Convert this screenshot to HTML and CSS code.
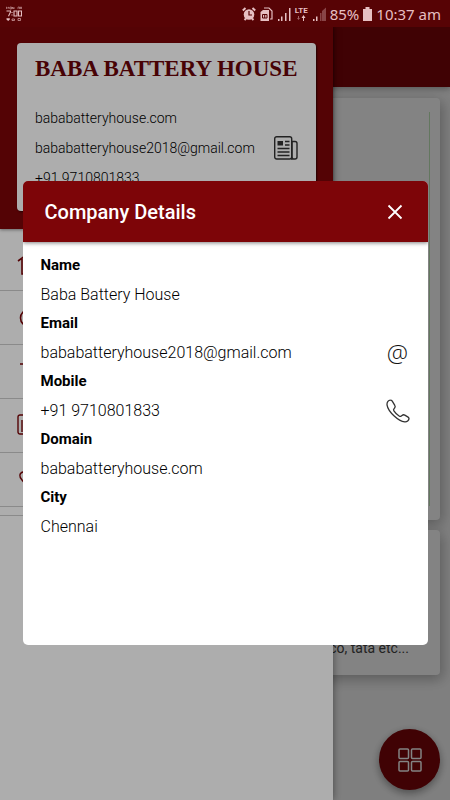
FILE: index.html
```html
<!DOCTYPE html>
<html lang="en">
<head>
<meta charset="utf-8">
<meta name="viewport" content="width=device-width, initial-scale=1">
<title>Company Details</title>
<link rel="stylesheet" href="styles.css">
</head>
<body>
<div class="page">
  <header class="page-bar"></header>
  <main class="page-body">
    <section class="card card-tall"><div class="card-media"></div></section>
    <section class="card card-short"><p>co, tata etc...</p></section>
  </main>
  <button class="fab" type="button" aria-label="Categories">
    <svg viewBox="0 0 24 24" width="24" height="24" fill="none" stroke="currentColor" stroke-width="1.5"><rect x="1" y="1" width="9.500" height="9.500" rx="1"/><rect x="13.500" y="1" width="9.500" height="9.500" rx="1"/><rect x="1" y="13.500" width="9.500" height="9.500" rx="1"/><rect x="13.500" y="13.500" width="9.500" height="9.500" rx="1"/></svg>
  </button>
</div>

<div class="drawer-layer">
  <aside class="drawer">
    <header class="drawer-head">
      <div class="profile">
        <h1>BABA BATTERY HOUSE</h1>
        <div class="profile-row">
          <div class="profile-lines">
            <p>bababatteryhouse.com</p>
            <p>bababatteryhouse2018@gmail.com</p>
            <p>+91 9710801833</p>
          </div>
          <button class="icon-button" type="button" aria-label="Company details">
            <svg viewBox="0 0 24 24" width="24" height="24" fill="none" stroke="currentColor" stroke-width="1.4"><rect x=".7" y=".7" width="17" height="22.300" rx="2"/><path d="M18 5.500h3a2 2 0 0 1 2 2v13.500a2 2 0 0 1-2 2h-4M18 5v16a2 2 0 0 0 2.500 2"/><path d="M3.500 5h5.500v4.500H3.500z" fill="currentColor" stroke="none"/><path d="M11 5.500h4.500M11 9h4.500M3.500 12.500h12M3.500 16h12M3.500 19.500h12"/></svg>
          </button>
        </div>
      </div>
    </header>
    <nav class="menu">
      <button type="button" aria-label="Home"><svg viewBox="0 0 24 24" width="24" height="24" fill="none" stroke="currentColor" stroke-width="1.6"><path d="M1 9l11-8 11 8M5 7v15h5v-7h4v7h5V7"/></svg></button>
      <button type="button" aria-label="About"><svg viewBox="0 0 24 24" width="24" height="24" fill="none" stroke="currentColor" stroke-width="1.6"><circle cx="12" cy="12" r="8.500"/><path d="M12 11v6M12 7v1"/></svg></button>
      <button type="button" aria-label="Products"><svg viewBox="0 0 24 24" width="24" height="24" fill="none" stroke="currentColor" stroke-width="1.600"><path d="M3 4h18M7 4v4h10V4M10 8v12h4V8"/></svg></button>
      <button type="button" aria-label="Details"><svg viewBox="0 0 24 24" width="24" height="24" fill="none" stroke="currentColor" stroke-width="1.4"><rect x="1" y="1" width="18" height="19" rx="2"/><path d="M5 6v12M8 6h8M8 10h8M8 14h8"/></svg></button>
      <button type="button" aria-label="Contact"><svg viewBox="0 0 24 24" width="24" height="24" fill="none" stroke="currentColor" stroke-width="1.4"><path d="M6 4C2 5 2 9 5 12c3 4 6 7 10 8 4 1 6-3 4-5l-3-2-3 2c-2-1-4-3-5-5l2-3-2-3z"/></svg></button>
    </nav>
  </aside>
</div>

<div class="modal-layer">
  <section class="modal" role="dialog" aria-labelledby="modal-title">
    <header class="modal-head">
      <h2 id="modal-title">Company Details</h2>
      <button class="close" type="button" aria-label="Close">
        <svg viewBox="0 0 16 16" width="16" height="16" fill="none" stroke="currentColor" stroke-width="1.800"><path d="M1.500 1.500l13 13M14.500 1.500l-13 13"/></svg>
      </button>
    </header>
    <dl class="details">
      <dt>Name</dt>
      <dd>Baba Battery House</dd>
      <dt>Email</dt>
      <dd>bababatteryhouse2018@gmail.com
        <a class="action at" href="#" aria-label="Send email">@</a></dd>
      <dt>Mobile</dt>
      <dd>+91 9710801833
        <a class="action" href="#" aria-label="Call"><svg viewBox="0 0 24 24" width="24" height="24" fill="none" stroke="currentColor" stroke-width="1.300" stroke-linejoin="round"><path d="M4.500 1.200C2.500 1 .8 3.200 1 5.800c.6 3.800 4 8.200 7.200 11.200 3.200 3 6.800 5.400 10.600 5.900 2.200.2 4.100-1.500 4.200-3.300 0-.7-.3-1.100-.9-1.500l-3.300-2c-1.100-.6-1.900-.4-2.800.3l-1 .8c-.6.4-1.100.3-1.900-.2-1.900-1.200-4.100-3.400-5.200-5.100-.5-.8-.5-1.300 0-1.900l.7-1c.7-.9.800-1.800.2-2.700l-2.400-4c-.5-.8-1.100-1.100-1.900-1.100z"/></svg></a></dd>
      <dt>Domain</dt>
      <dd>bababatteryhouse.com</dd>
      <dt>City</dt>
      <dd>Chennai</dd>
    </dl>
  </section>
</div>

<div class="status">
  <svg class="clock-widget" viewBox="0 0 16 16" width="16" height="16" fill="none" stroke="currentColor"><path stroke-width=".8" opacity=".65" d="M.500 3V1l1.200 1 1.200-1v2M4 1h1.500v2H4zM6.500 3V1L8 3V1M12 3V1h1.500v2M14.500 3V1h1v2"/><path stroke-width="1.100" d="M.5 5h4v1L2.500 10.200M6 6v1M6 8.500v1M8 5h3v5H8zM12.500 5h3v5h-3z"/><path stroke-width=".8" opacity=".8" d="M6 14.500V13h2.500v1.500zM12 12.500h2.500v2H12z"/><path fill="currentColor" stroke="none" d="M.5 12.300h3.300v1.200L2.200 15 .5 13.500z"/></svg>
  <div class="status-right">
    <svg viewBox="0 0 14 14" width="14" height="14" fill="none" stroke="currentColor"><circle cx="7" cy="7.500" r="5.300" fill="currentColor" stroke="none"/><path stroke-width="2" d="M.8 3.500L3.500 1M13.200 3.500L10.500 1M2.500 13l1.500-1.500M11.500 13L10 11.500"/><path stroke="#570305" stroke-width="1.200" d="M7 4v4h3"/></svg>
    <svg viewBox="0 0 13 14" width="13" height="14" fill="none" stroke="currentColor"><path fill="currentColor" stroke="none" d="M.5 5L3 3h6v11H.5z"/><path stroke-width="1.200" d="M4 1h5l3 3v8h-2"/><path stroke="#570305" d="M2.500 7.500h4.500v3.500H2.500zM4.700 7.500V11"/></svg>
    <svg viewBox="0 0 14 14" width="14" height="14" fill="currentColor"><path d="M1 12h1.500v2H1zM4 9.500h1.500V14H4zM8 6h1.500v8H8zM12 1h1.500v13H12z"/></svg>
    <span class="lte">LTE<svg viewBox="0 0 10 6" width="10" height="6"><path fill="currentColor" opacity=".5" d="M2 1h1v2h1L2.500 5 1 3h1z"/><path fill="currentColor" d="M7 6h1V3h1.500l-2-3-2 3H7z"/></svg></span>
    <svg viewBox="0 0 14 14" width="14" height="14" fill="currentColor"><path d="M1 12h1.500v2H1zM4 9.500h1.500V14H4z"/><path d="M8 6h1.500v8H8zM10 4l4-3.500V14h-4z" opacity=".35"/></svg>
    <span class="battery-text">85%</span>
    <svg viewBox="0 0 9 14" width="9" height="14" fill="currentColor"><path d="M0 2h2.500V0h4v2H9v12H0z"/></svg>
    <span class="time">10:37 am</span>
  </div>
</div>
</body>
</html>
```
FILE: styles.css
```css
* { box-sizing: border-box; }

html, body { height: 100%; }

body {
  margin: 0;
  position: relative;
  overflow: hidden;
  background: #fff;
  font-family: Roboto, "Liberation Sans", sans-serif;
  font-size: 16px;
  color: #111;
}

h1, h2, p, dl, dd { margin: 0; }

button {
  margin: 0;
  padding: 0;
  border: 0;
  background: none;
  color: inherit;
  font: inherit;
}

svg { display: block; flex: none; }

/* status bar, over every layer */
.status {
  position: absolute;
  top: 0;
  left: 0;
  right: 0;
  height: 27px;
  padding: 0 9px 0 6px;
  display: flex;
  align-items: center;
  justify-content: space-between;
  background: #570305;
  color: #e6bfc2;
}

.status-right {
  display: flex;
  align-items: center;
  gap: 4px;
  font-family: "Noto Sans", sans-serif;
  font-size: 15px;
}

.lte {
  display: flex;
  flex-direction: column;
  align-items: center;
  font: bold 8px/8px Roboto, sans-serif;
}

/* page */
.page {
  height: 100%;
  padding-top: 27px;
  background: #f8f8f8;
}

.page-bar {
  height: 60px;
  background: #7d0508;
  box-shadow: 0 2px 6px rgba(0, 0, 0, .3);
}

.page-body {
  display: flex;
  flex-direction: column;
  gap: 10px;
  padding: 11px 10px;
}

.card {
  border-radius: 4px;
  background: #fff;
  box-shadow: 2px 4px 14px rgba(0, 0, 0, .3);
}

.card-tall { height: 422px; padding: 14px 10px; }

.card-media { height: 100%; border-right: 1px solid #c0e8ba; }

.card-short {
  height: 145px;
  padding: 0 31px 16px;
  display: flex;
  align-items: flex-end;
  justify-content: flex-end;
  font-size: 14px;
  line-height: 22px;
  color: #444;
}

.fab {
  position: absolute;
  right: 10px;
  bottom: 10px;
  width: 61px;
  height: 61px;
  display: grid;
  place-items: center;
  border-radius: 50%;
  background: #7d0508;
  color: #fff;
  box-shadow: 0 3px 8px rgba(0, 0, 0, .4);
}

/* side drawer */
.drawer-layer, .modal-layer {
  position: absolute;
  inset: 0;
  padding-top: 26px;
}

.drawer-layer { background: rgba(0, 0, 0, .24); }

.drawer {
  width: 74%;
  height: 100%;
  background: #fff;
  box-shadow: 0 0 8px rgba(0, 0, 0, .45);
}

.drawer-head {
  padding: 17px 17px 18px;
  background: #7d0508;
  box-shadow: 0 1px 3px rgba(0, 0, 0, .4);
}

.profile {
  padding: 12px 18px 18px;
  border-radius: 4px;
  background: #fff;
  box-shadow: 1px 1px 2px rgba(0, 0, 0, .6);
}

.profile h1 {
  margin-bottom: 20px;
  font: bold 23px/28px "Liberation Serif", serif;
  color: #6a0408;
  white-space: nowrap;
}

.profile-row { display: flex; justify-content: space-between; align-items: center; }

.profile-lines {
  font-size: 14px;
  font-weight: 300;
  line-height: 30px;
  color: #000;
}

.icon-button { color: #333; }

.menu { padding-top: 8px; border-bottom: 1px solid #ccc; }

.menu::after { content: ""; display: block; height: 8px; }

.menu button {
  display: flex;
  align-items: center;
  width: 100%;
  height: 54px;
  padding-left: 17px;
  border-bottom: 1px solid #ccc;
  color: #7d0508;
}

/* dialog */
.modal-layer {
  display: grid;
  place-items: center;
  background: rgba(0, 0, 0, .32);
}

.modal {
  width: 90%;
  min-height: 58vh;
  border-radius: 5px;
  overflow: hidden;
  background: #fff;
}

.modal-head {
  display: flex;
  align-items: center;
  justify-content: space-between;
  height: 61px;
  padding: 0 25px 0 22px;
  background: #7d0508;
  color: #fff;
  box-shadow: 0 1px 4px rgba(0, 0, 0, .5);
}

.modal-head h2 { font-size: 20px; font-weight: 500; }

.details {
  padding: 9px 18px;
  line-height: 29px;
}

.details dt { font-size: 15px; font-weight: 700; color: #000; }

.details dd {
  display: flex;
  justify-content: space-between;
  align-items: center;
  height: 29px;
  font-weight: 300;
  color: #000;
}

.action {
  width: 24px;
  display: flex;
  justify-content: center;
  color: #333;
  text-decoration: none;
}

.at { font: 300 24px/26px "Open Sans", sans-serif; color: #111; }
```
